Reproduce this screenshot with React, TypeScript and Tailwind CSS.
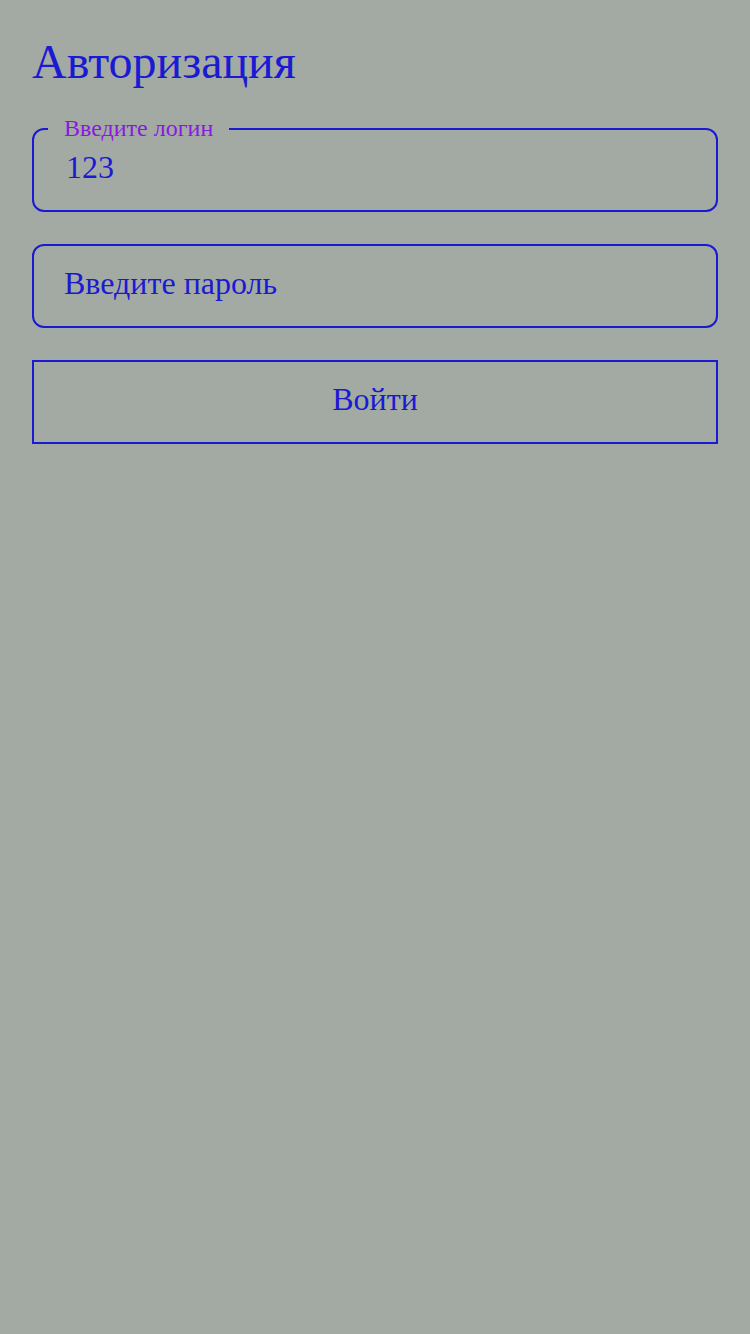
import React from "react";

export default function App() {
  const serif = { fontFamily: '"Liberation Serif", "Times New Roman", serif' };
  return (
    <div
      className="min-h-[1334px] w-full bg-[#a3aaa3] px-8 pt-[26px] text-[#1a1ad2]"
      style={serif}
    >
      <h1 className="text-[48px] leading-[72px] font-normal">Авторизация</h1>
      <div className="mt-[30px] flex flex-col gap-8">
        <div className="relative h-[84px] rounded-xl border-2 border-[#1a1ad2]">
          <span className="absolute left-[14px] top-[-17px] bg-[#a3aaa3] px-4 text-[24px] leading-[30px] text-[#8a18e0]">
            Введите логин
          </span>
          <div className="flex h-full items-center pb-[6px] pl-[32px] text-[32px] leading-[40px]">
            123
          </div>
        </div>
        <div className="flex h-[84px] items-center rounded-xl border-2 border-[#1a1ad2] pb-[6px] pl-[30px] text-[32px] leading-[40px]">
          Введите пароль
        </div>
        <div className="flex h-[84px] items-center justify-center border-2 border-[#1a1ad2] pb-[6px] text-[32px] leading-[40px]">
          Войти
        </div>
      </div>
    </div>
  );
}
